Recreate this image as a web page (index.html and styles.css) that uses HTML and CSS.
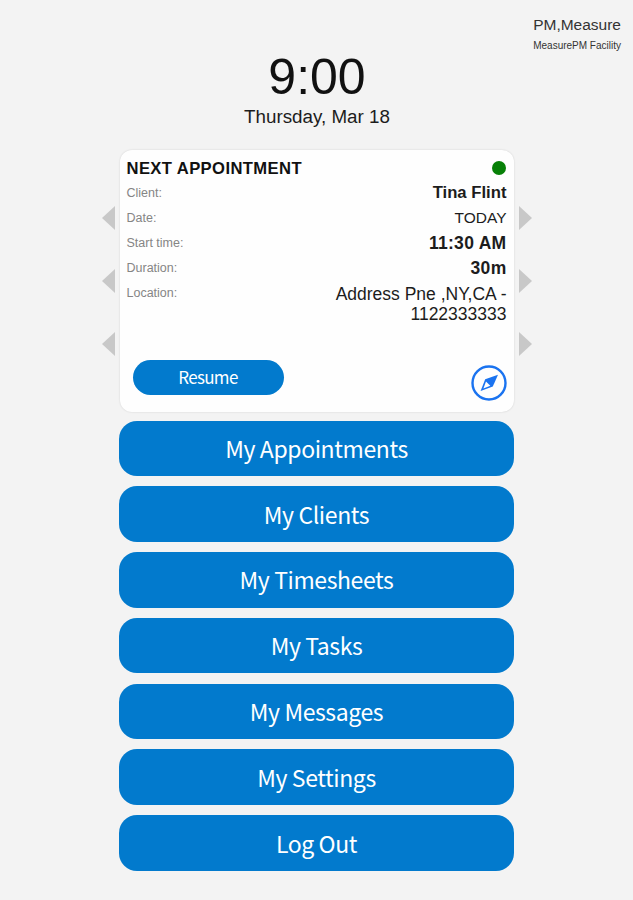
FILE: index.html
```html
<!DOCTYPE html>
<html lang="en">
<head>
    <meta charset="UTF-8">
    <meta name="viewport" content="width=device-width, initial-scale=1.0">
    <title>Home</title>
    <link rel="stylesheet" href="styles.css">
</head>
<body>
    <div class="user-info">
        <div class="user-name">PM,Measure</div>
        <div class="facility">MeasurePM Facility</div>
    </div>

    <div class="clock">
        <div class="time">9:00</div>
        <div class="date">Thursday, Mar 18</div>
    </div>

    <div class="carousel">
        <div class="arrows">
            <span class="arrow-left"></span>
            <span class="arrow-left"></span>
            <span class="arrow-left"></span>
        </div>

        <div class="card">
            <div class="card-header">
                <h2>NEXT APPOINTMENT</h2>
                <span class="status-dot"></span>
            </div>
            <div class="row"><span class="label">Client:</span><span class="value client">Tina Flint</span></div>
            <div class="row"><span class="label">Date:</span><span class="value day">TODAY</span></div>
            <div class="row"><span class="label">Start time:</span><span class="value bold">11:30 AM</span></div>
            <div class="row"><span class="label">Duration:</span><span class="value bold">30m</span></div>
            <div class="row location"><span class="label">Location:</span><span class="value">Address Pne ,NY,CA -<br>1122333333</span></div>
            <div class="card-footer">
                <button class="resume-btn">Resume</button>
                <svg class="compass" viewBox="0 0 36 36">
                    <circle cx="18" cy="18" r="16.5" fill="none" stroke="#1a73f0" stroke-width="2.4"/>
                    <path d="M27 9.8 L14.2 14.2 L9.6 26 L21.8 21.4 Z" fill="#1a73f0"/>
                    <path d="M15 16.6 L19.3 20.8 L12.4 23.4 Z" fill="#fff"/>
                </svg>
            </div>
        </div>

        <div class="arrows">
            <span class="arrow-right"></span>
            <span class="arrow-right"></span>
            <span class="arrow-right"></span>
        </div>
    </div>

    <div class="menu">
        <button class="menu-btn">My Appointments</button>
        <button class="menu-btn">My Clients</button>
        <button class="menu-btn">My Timesheets</button>
        <button class="menu-btn">My Tasks</button>
        <button class="menu-btn">My Messages</button>
        <button class="menu-btn">My Settings</button>
        <button class="menu-btn">Log Out</button>
    </div>
</body>
</html>
```
FILE: styles.css
```css
* {
    box-sizing: border-box;
}
body {
    margin: 0;
    height: 900px;
    overflow: hidden;
    background-color: #f3f3f3;
    color: #1c1c1c;
    font-family: "Liberation Sans", Arial, sans-serif;
}
.user-info {
    height: 52px;
    padding: 15px 12px 0 0;
    display: flex;
    flex-direction: column;
    align-items: flex-end;
    color: #333;
}
.user-name {
    font-size: 15.5px;
    line-height: 20px;
}
.facility {
    margin-top: 3px;
    font-size: 10px;
    line-height: 15px;
}
.clock {
    height: 98px;
    text-align: center;
    padding-left: 1px;
}
.time {
    font-size: 50px;
    line-height: 50px;
    color: #111;
}
.date {
    margin-top: 4px;
    font-size: 18.8px;
    line-height: 22px;
}
.carousel {
    display: flex;
    justify-content: center;
    gap: 5px;
}
.arrows {
    display: flex;
    flex-direction: column;
    gap: 39px;
    padding-top: 56px;
}
.arrow-left, .arrow-right {
    width: 0;
    height: 0;
    border-top: 12px solid transparent;
    border-bottom: 12px solid transparent;
}
.arrow-left {
    border-right: 13px solid #c8c8c8;
}
.arrow-right {
    border-left: 13px solid #c8c8c8;
}
.card {
    width: 394px;
    height: 262px;
    padding: 5px 7px 0;
    display: flex;
    flex-direction: column;
    background-color: #fefefe;
    border-radius: 12px;
    box-shadow: 0 0 2px rgba(0, 0, 0, 0.15);
}
.card-header {
    height: 25px;
    display: flex;
    justify-content: space-between;
    align-items: center;
}
h2 {
    margin: 2px 0 0;
    font-size: 16.6px;
    letter-spacing: 0.4px;
    color: #111;
}
.status-dot {
    width: 14px;
    height: 14px;
    margin-right: 1px;
    border-radius: 50%;
    background-color: #078007;
}
.row {
    height: 25px;
    display: flex;
    justify-content: space-between;
    align-items: center;
}
.label {
    font-size: 12.5px;
    color: #858585;
}
.value {
    font-size: 17.5px;
    line-height: 20px;
    text-align: right;
}
.client {
    font-size: 16.7px;
    font-weight: bold;
}
.day {
    font-size: 15.5px;
}
.bold {
    font-size: 17.5px;
    letter-spacing: 0.3px;
    font-weight: bold;
}
.location {
    height: 46px;
    align-items: flex-start;
}
.location .label {
    line-height: 27px;
}
.location .value {
    padding-top: 4px;
}
.card-footer {
    margin: auto 0 11px;
    padding-left: 6px;
    display: flex;
    justify-content: space-between;
    align-items: flex-end;
}
.resume-btn, .menu-btn {
    padding: 0 0 1px;
    border: none;
    background-color: #027acd;
    color: #fff;
    font-family: "Noto Sans CJK SC", "Noto Sans", sans-serif;
    cursor: pointer;
}
.resume-btn {
    width: 151px;
    height: 35px;
    padding-bottom: 2px;
    margin-bottom: 6px;
    border-radius: 18px;
    font-size: 17px;
    letter-spacing: -0.7px;
}
.compass {
    width: 36px;
    height: 36px;
}
.menu {
    width: 395px;
    margin: 8.5px auto 0;
    display: flex;
    flex-direction: column;
    gap: 10.3px;
}
.menu-btn {
    height: 55.5px;
    border-radius: 18px;
    font-size: 23px;
    letter-spacing: -0.4px;
}
```
